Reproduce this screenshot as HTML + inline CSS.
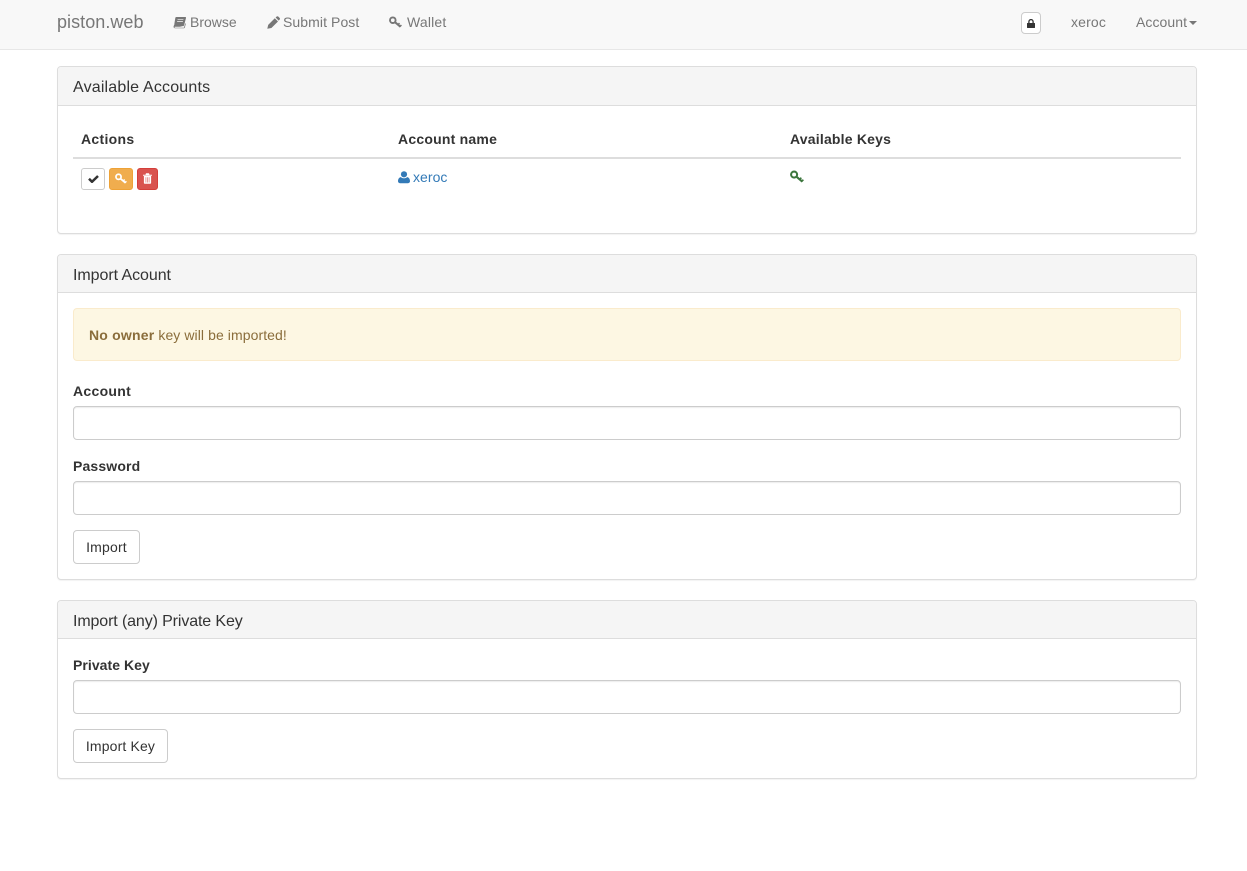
<!DOCTYPE html>
<html><head><meta charset="utf-8"><title>piston.web</title>
<style>
html,body{margin:0;padding:0;background:#fff;width:1247px;height:871px;overflow:hidden}
body{font-family:"Liberation Sans",sans-serif;font-size:14px;color:#333;position:relative}
.t{position:absolute;white-space:nowrap;line-height:20px;letter-spacing:.08px}
.b{font-weight:bold;color:#333;letter-spacing:.2px}
.n{color:#777}
.nav{position:absolute;left:0;top:0;width:1247px;height:49px;background:#f8f8f8;border-bottom:1px solid #e7e7e7}
.panel{position:absolute;left:57px;width:1138px;background:#fff;border:1px solid #ddd;border-radius:4px;box-shadow:0 1px 1px rgba(0,0,0,.05)}
.ph{position:absolute;left:0;top:0;right:0;background:#f5f5f5;border-bottom:1px solid #ddd;border-radius:3px 3px 0 0}
.h{position:absolute;white-space:nowrap;font-size:16px;line-height:18px;color:#333}
.input{position:absolute;left:73px;width:1106px;height:32px;background:#fff;border:1px solid #ccc;border-radius:4px;box-shadow:inset 0 1px 1px rgba(0,0,0,.075)}
.btn{position:absolute;left:73px;height:32px;background:#fff;border:1px solid #ccc;border-radius:4px;line-height:32px;text-align:center;color:#333;letter-spacing:.18px}
.x{position:absolute;box-sizing:border-box;width:24px;height:22px;border-radius:3px;top:168px}
svg{position:absolute;display:block}
</style></head><body>
<div class="nav"></div>
<div class="t n" style="left:57px;top:12px;font-size:18px;letter-spacing:.05px">piston.web</div>
<svg style="left:173px;top:16px" width="13" height="13" viewBox="0 0 13 13"><path fill="#777" d="M3.300 1H12.200c.6 0 .9.400.8 1l-1.900 7.200c-.2.600-.6.900-1.200.9H1.500L1.400 7.800 2.300 2c.1-.6.500-1 1-1z"/><path fill="#777" d="M1.300 8.500.6 10.200C.3 11.300 1 12.300 2.200 12.300h8.500c.6 0 1-.3 1.200-.9l.9-3.600-.6-.5-1.100 4.100c-.1.300-.3.400-.6.400H2.300c-1 0-1-1.100-.2-1.100H9.500z"/><path fill="#f8f8f8" d="M4.700 3.200h5.800l-.2.700H4.500zM4.200 5h5.800l-.2.700H4z"/></svg>
<div class="t n" style="left:190px;top:12px;letter-spacing:0">Browse</div>
<svg style="left:267px;top:16px" width="13" height="13" viewBox="0 0 13 13"><path fill="#777" d="M.3 12.700 1.200 8.900 7.800 2.300 11 5.500 4.400 12zM8.600 1.500 9.700.5c.5-.4 1-.4 1.500 0l1.500 1.500c.4.500.4 1 0 1.500L11.700 4.600z"/></svg>
<div class="t n" style="left:283px;top:12px">Submit Post</div>
<svg style="left:389px;top:16px" width="13" height="12" viewBox="0 0 13 12"><g fill="none" stroke="#777"><circle cx="3.800" cy="4.200" r="2.800" stroke-width="1.900"/><path stroke-width="2" d="M6 6.200l5.500 4.600"/><path stroke-width="1.500" d="M9 8.700l1.500-1.600M11 10.500l1.400-1.500"/></g></svg>
<div class="t n" style="left:407px;top:12px;letter-spacing:.18px">Wallet</div>

<div style="position:absolute;left:1021px;top:12px;width:18px;height:20px;background:#fff;border:1px solid #ccc;border-radius:4px"></div>
<svg style="left:1027px;top:19px" width="8" height="9" viewBox="0 0 8 9"><path fill="#333" d="M.6 4h6.800c.4 0 .6.200.6.600v3.800c0 .4-.2.600-.6.600H.6C.2 9 0 8.800 0 8.400V4.600C0 4.200.2 4 .6 4z"/><path fill="none" stroke="#333" stroke-width="1.300" d="M1.900 4.300V2.700a2.100 2.100 0 0 1 4.200 0v1.600"/></svg>
<div class="t n" style="left:1071px;top:12px;letter-spacing:.15px">xeroc</div>
<div class="t n" style="left:1136px;top:12px;letter-spacing:.07px">Account</div>
<div style="position:absolute;left:1189px;top:21px;width:0;height:0;border-top:4px solid #777;border-left:4px solid transparent;border-right:4px solid transparent"></div>

<!-- Panel 1 -->
<div class="panel" style="top:66px;height:166px"><div class="ph" style="height:38px"></div></div>
<div class="h" style="left:73px;top:79px;letter-spacing:.18px">Available Accounts</div>
<div class="t b" style="left:81px;top:129px;letter-spacing:.3px">Actions</div>
<div class="t b" style="left:398px;top:129px;letter-spacing:.22px">Account name</div>
<div class="t b" style="left:790px;top:129px;letter-spacing:.2px">Available Keys</div>
<div style="position:absolute;left:73px;top:157px;width:1108px;height:2px;background:#ddd"></div>

<div class="x" style="left:81px;background:#fff;border:1px solid #ccc"></div>
<svg style="left:88px;top:175px" width="11" height="8" viewBox="0 0 11 8"><path fill="none" stroke="#333" stroke-width="2.500" d="M1 3.800l3 3L10 1"/></svg>
<div class="x" style="left:109px;background:#f0ad4e;border:1px solid #eea236"></div>
<svg style="left:115px;top:173px" width="12" height="11" viewBox="0 0 13 12"><g fill="none" stroke="#fff"><circle cx="3.800" cy="4.200" r="2.800" stroke-width="1.900"/><path stroke-width="2" d="M6 6.200l5.500 4.600"/><path stroke-width="1.500" d="M9 8.700l1.500-1.600M11 10.500l1.400-1.500"/></g></svg>
<div class="x" style="left:137px;width:21px;background:#d9534f;border:1px solid #d43f3a"></div>
<svg style="left:143px;top:173px" width="9" height="11" viewBox="0 0 9 11"><path fill="#fff" d="M0 1.700h9v1H0zM3 .2h3l.5 1.500h-4zM.9 3h7.200v6.800c0 .7-.4 1-1 1H1.900c-.6 0-1-.3-1-1z"/><path fill="#d9534f" opacity=".7" d="M2.500 4.200h.8v5.300h-.8zM4.100 4.200h.8v5.300h-.8zM5.700 4.200h.8v5.300h-.8z"/></svg>

<svg style="left:398px;top:171px" width="12" height="13" viewBox="0 0 12 13"><circle cx="6" cy="3.300" r="3.100" fill="#337ab7"/><path fill="#337ab7" d="M0 10.300C0 8 1 6.400 2.800 6.100c1.800 1.600 4.600 1.600 6.400 0C11 6.400 12 8 12 10.300c0 1.200-.9 1.900-2 1.900H2c-1.100 0-2-.7-2-1.900z"/></svg>
<div class="t" style="left:413px;top:167px;color:#337ab7;letter-spacing:.05px">xeroc</div>
<svg style="left:790px;top:170px" width="14" height="13" viewBox="0 0 13 12"><g fill="none" stroke="#3c763d"><circle cx="3.800" cy="4.200" r="2.800" stroke-width="1.900"/><path stroke-width="2" d="M6 6.200l5.500 4.600"/><path stroke-width="1.500" d="M9 8.700l1.500-1.600M11 10.500l1.400-1.500"/></g></svg>

<!-- Panel 2 -->
<div class="panel" style="top:254px;height:324px"><div class="ph" style="height:37px"></div></div>
<div class="h" style="left:73px;top:267px;letter-spacing:-.06px">Import Acount</div>
<div style="position:absolute;left:73px;top:308px;width:1106px;height:51px;background:#fdf7e3;border:1px solid #faebcc;border-radius:4px"></div>
<div class="t" style="left:89px;top:325px;color:#8a6d3b;letter-spacing:.08px"><b style="letter-spacing:.2px">No owner</b> key will be imported!</div>
<div class="t b" style="left:73px;top:381px;letter-spacing:.3px">Account</div>
<div class="input" style="top:406px"></div>
<div class="t b" style="left:73px;top:456px;letter-spacing:.15px">Password</div>
<div class="input" style="top:481px"></div>
<div class="btn" style="top:530px;width:65px">Import</div>

<!-- Panel 3 -->
<div class="panel" style="top:600px;height:177px"><div class="ph" style="height:37px"></div></div>
<div class="h" style="left:73px;top:613px;letter-spacing:-.12px">Import (any) Private Key</div>
<div class="t b" style="left:73px;top:655px;letter-spacing:.05px">Private Key</div>
<div class="input" style="top:680px"></div>
<div class="btn" style="top:729px;width:93px;letter-spacing:.15px">Import Key</div>
</body></html>
